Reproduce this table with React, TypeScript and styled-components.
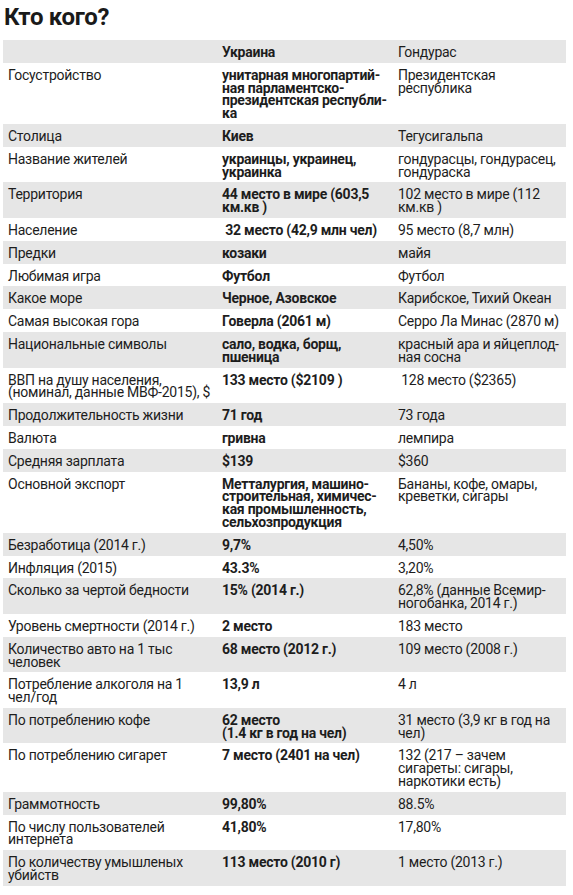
import styled, { createGlobalStyle } from "styled-components";

const GlobalStyle = createGlobalStyle`
  html, body {
    margin: 0;
    padding: 0;
    background: #ffffff;
  }
  body {
    font-family: "Roboto", "Liberation Sans", sans-serif;
    color: #1d1d1d;
  }
`;

const Page = styled.main`
  width: 573px;
  padding: 0 7px 0 3px;
  box-sizing: border-box;
`;

const Title = styled.h1`
  margin: 0;
  padding: 2px 0 0 1px;
  height: 40px;
  box-sizing: border-box;
  font-size: 24px;
  line-height: 30px;
  font-weight: 700;
  letter-spacing: -0.3px;
  color: #1a1a1a;
`;

const Table = styled.div`
  display: grid;
  grid-template-columns: 214px 176px 1fr;
`;

const Row = styled.div<{ $shaded: boolean }>`
  display: contents;
  & > * {
    background: ${(p) => (p.$shaded ? "#e6e6e6" : "transparent")};
  }
`;

const Cell = styled.div<{ $bold?: boolean }>`
  padding: 6px 0 4px 5px;
  font-size: 14px;
  line-height: 12.8px;
  letter-spacing: -0.25px;
  white-space: pre;
  overflow: hidden;
  font-weight: ${(p) => (p.$bold ? 700 : 400)};
`;

const rows: [string, string, string][] = [
  ["", "Украина", "Гондурас"],
  [
    "Госустройство",
    "унитарная многопартий-\nная парламентско-\nпрезидентская республи-\nка",
    "Президентская\nреспублика",
  ],
  ["Столица", "Киев", "Тегусигальпа"],
  ["Название жителей", "украинцы, украинец,\nукраинка", "гондурасцы, гондурасец,\nгондураска"],
  ["Территория", "44 место в мире (603,5\nкм.кв )", "102 место в мире (112\nкм.кв )"],
  ["Население", " 32 место (42,9 млн чел)", "95 место (8,7 млн)"],
  ["Предки", "козаки", "майя"],
  ["Любимая игра", "Футбол", "Футбол"],
  ["Какое море", "Черное, Азовское", "Карибское, Тихий Океан"],
  ["Самая высокая гора", "Говерла (2061 м)", "Серро Ла Минас (2870 м)"],
  ["Национальные символы", "сало, водка, борщ,\nпшеница", "красный ара и яйцеплод-\nная сосна"],
  [
    "ВВП на душу населения,\n(номинал, данные МВФ-2015), $",
    "133 место ($2109 )",
    " 128 место ($2365)",
  ],
  ["Продолжительность жизни", "71 год", "73 года"],
  ["Валюта", "гривна", "лемпира"],
  ["Средняя зарплата", "$139", "$360"],
  [
    "Основной экспорт",
    "Метталургия, машино-\nстроительная, химичес-\nкая промышленность,\nсельхозпродукция",
    "Бананы, кофе, омары,\nкреветки, сигары",
  ],
  ["Безработица (2014 г.)", "9,7%", "4,50%"],
  ["Инфляция (2015)", "43.3%", "3,20%"],
  ["Сколько за чертой бедности", "15% (2014 г.)", "62,8% (данные Всемир-\nногобанка, 2014 г.)"],
  ["Уровень смертности (2014 г.)", "2 место", "183 место"],
  ["Количество авто на 1 тыс\nчеловек", "68 место (2012 г.)", "109 место (2008 г.)"],
  ["Потребление алкоголя на 1\nчел/год", "13,9 л", "4 л"],
  ["По потреблению кофе", "62 место\n(1.4 кг в год на чел)", "31 место (3,9 кг в год на\nчел)"],
  [
    "По потреблению сигарет",
    "7 место (2401 на чел)",
    "132 (217 – зачем\nсигареты: сигары,\nнаркотики есть)",
  ],
  ["Граммотность", "99,80%", "88.5%"],
  ["По числу пользователей\nинтернета", "41,80%", "17,80%"],
  ["По количеству умышленых\nубийств", "113 место (2010 г)", "1 место (2013 г.)"],
];

export default function App() {
  return (
    <Page>
      <GlobalStyle />
      <Title>Кто кого?</Title>
      <Table>
        {rows.map(([label, ukraine, honduras], i) => (
          <Row key={i} $shaded={i % 2 === 0}>
            <Cell>{label}</Cell>
            <Cell $bold>{ukraine}</Cell>
            <Cell>{honduras}</Cell>
          </Row>
        ))}
      </Table>
    </Page>
  );
}
